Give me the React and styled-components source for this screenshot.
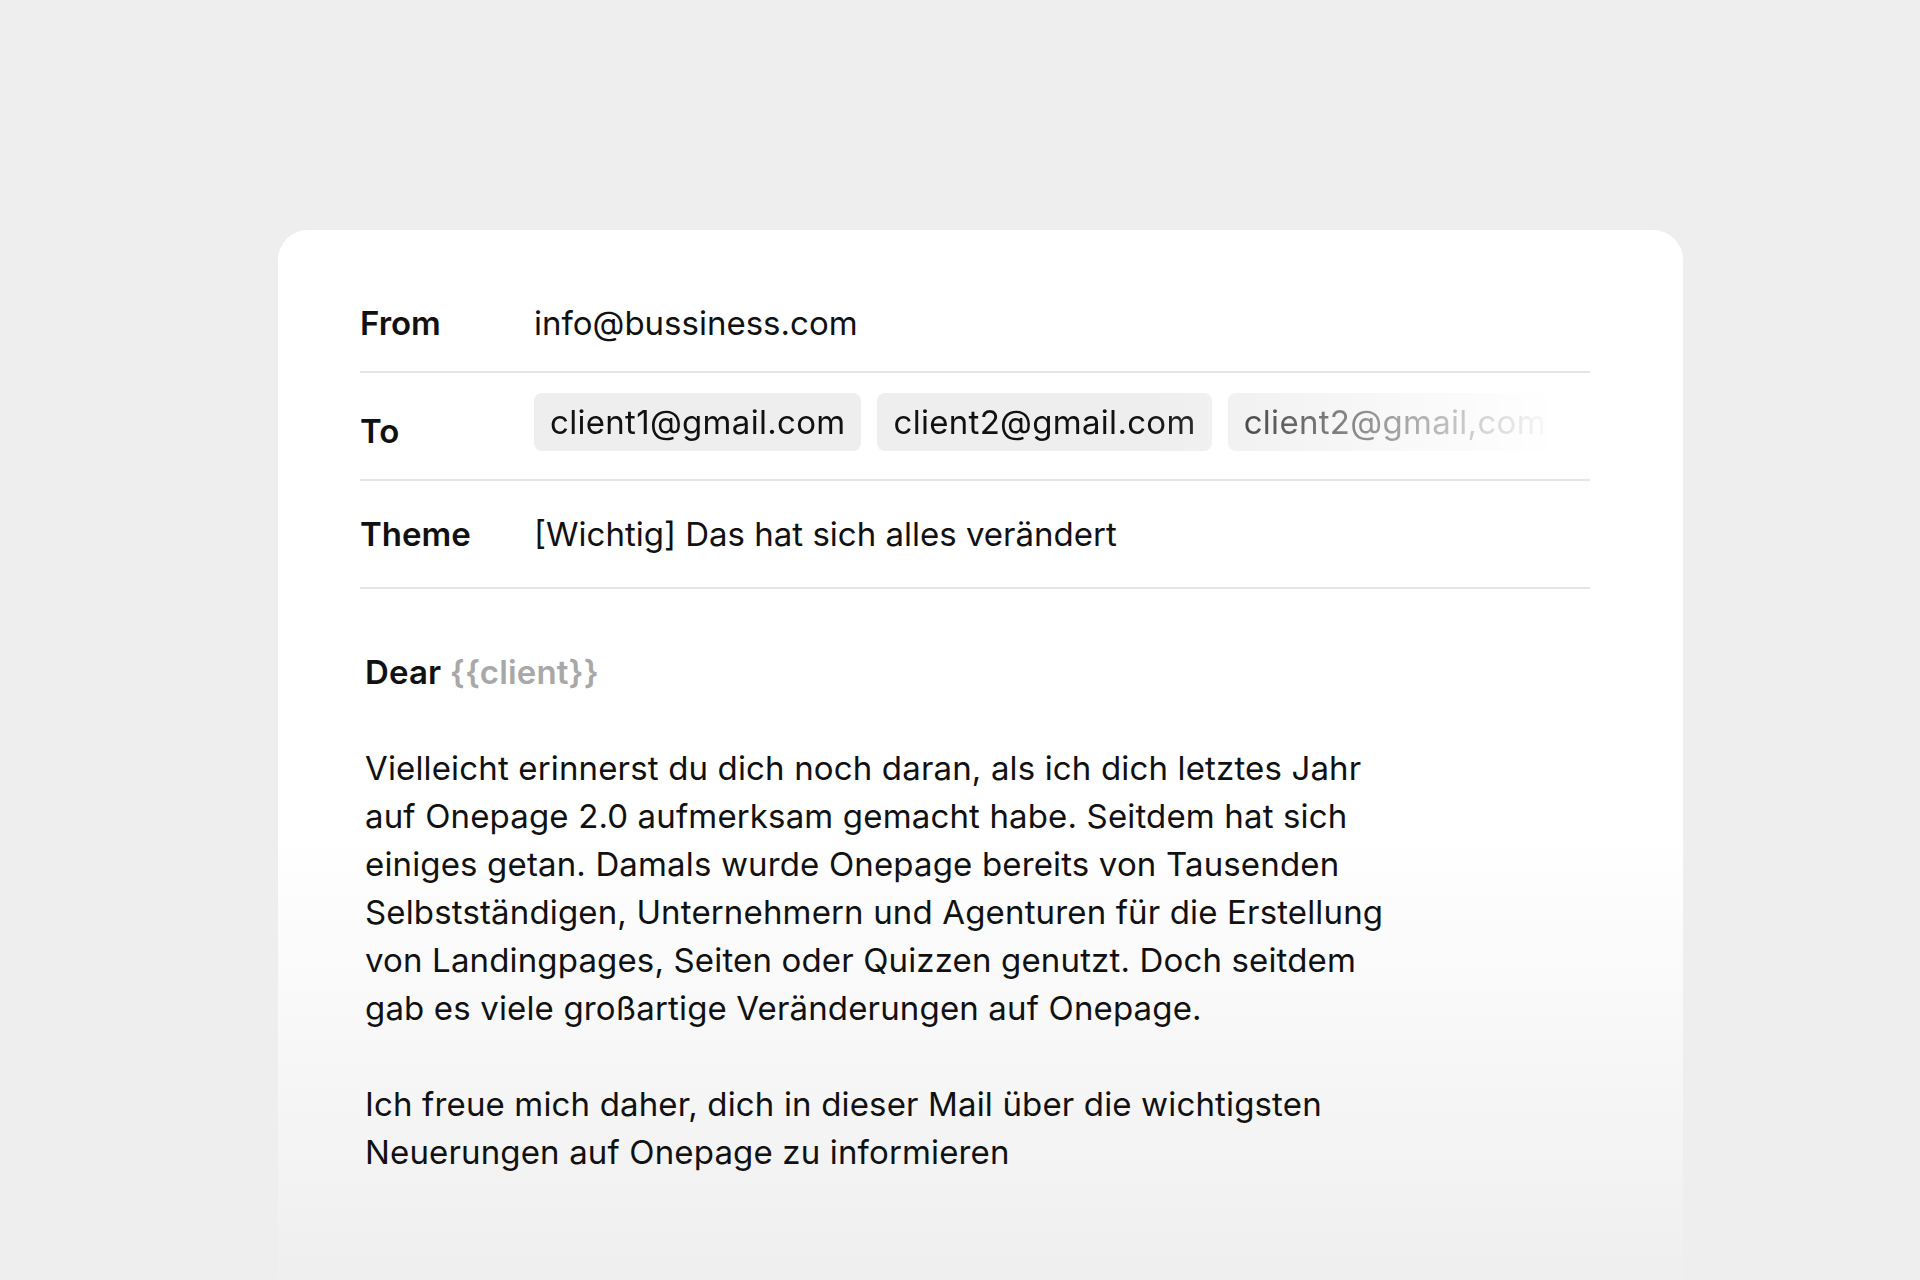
import React from "react";
import styled, { createGlobalStyle } from "styled-components";

const GlobalStyle = createGlobalStyle`
  html, body {
    margin: 0;
    padding: 0;
    background: #eeeeee;
    overflow: hidden;
  }
  body {
    font-family: Inter, "Noto Sans", sans-serif;
    color: #111;
  }
`;

const recipients = ["client1@gmail.com", "client2@gmail.com", "client2@gmail,com"];

export default function App() {
  return (
    <Page>
      <GlobalStyle />
      <Card>
        <Fields>
          <Row $offset={10}>
            <Label>From</Label>
            <Value>info@bussiness.com</Value>
          </Row>
          <Row>
            <Label $shift={10}>To</Label>
            <Chips>
              {recipients.map((mail, i) => (
                <Chip key={i}>{mail}</Chip>
              ))}
            </Chips>
          </Row>
          <Row>
            <Label>Theme</Label>
            <Value>[Wichtig] Das hat sich alles verändert</Value>
          </Row>
        </Fields>

        <Body>
          <Greeting>
            Dear <Placeholder>{"{{client}}"}</Placeholder>
          </Greeting>
          <Paragraph>
            Vielleicht erinnerst du dich noch daran, als ich dich letztes Jahr
            <br />
            auf Onepage 2.0 aufmerksam gemacht habe. Seitdem hat sich
            <br />
            einiges getan. Damals wurde Onepage bereits von Tausenden
            <br />
            Selbstständigen, Unternehmern und Agenturen für die Erstellung
            <br />
            von Landingpages, Seiten oder Quizzen genutzt. Doch seitdem
            <br />
            gab es viele großartige Veränderungen auf Onepage.
          </Paragraph>
          <Paragraph>
            Ich freue mich daher, dich in dieser Mail über die wichtigsten
            <br />
            Neuerungen auf Onepage zu informieren
          </Paragraph>
        </Body>
      </Card>
    </Page>
  );
}

const Page = styled.div`
  min-height: 1280px;
  padding: 230px 0 0 278px;
  box-sizing: border-box;
`;

const Card = styled.div`
  width: 1405px;
  min-height: 1100px;
  box-sizing: border-box;
  padding: 35px 93px 0 82px;
  border-radius: 30px 30px 0 0;
  background: linear-gradient(180deg, #ffffff 0%, #ffffff 55%, #efefef 95%);
`;

const Fields = styled.div`
  display: flex;
  flex-direction: column;
`;

const Row = styled.div`
  display: flex;
  align-items: center;
  box-sizing: border-box;
  min-height: 108px;
  padding-top: ${(p) => p.$offset || 0}px;
  border-bottom: 2px solid #e5e5e5;
`;

const Label = styled.div`
  width: 174px;
  flex-shrink: 0;
  font-size: 33px;
  font-weight: 600;
  line-height: 48px;
  color: #111;
  padding-top: ${(p) => p.$shift || 0}px;
`;

const Value = styled.div`
  font-size: 33px;
  font-weight: 400;
  line-height: 48px;
  color: #111;
`;

const Chips = styled.div`
  display: flex;
  gap: 16px;
  flex: 1;
  overflow: hidden;
  padding-bottom: 8px;
  -webkit-mask-image: linear-gradient(90deg, #000 58%, transparent 97%);
  mask-image: linear-gradient(90deg, #000 58%, transparent 97%);
`;

const Chip = styled.div`
  flex-shrink: 0;
  height: 58px;
  display: flex;
  align-items: center;
  padding: 0 16px;
  border-radius: 8px;
  background: #eeeeee;
  font-size: 33px;
  letter-spacing: 0.3px;
  line-height: 1;
  color: #111;
  white-space: nowrap;
`;

const Body = styled.div`
  padding: 59px 0 0 5px;
  font-size: 33px;
  letter-spacing: 0.15px;
  line-height: 48px;
  color: #111;
`;

const Greeting = styled.p`
  margin: 0 0 48px;
  font-weight: 600;
`;

const Placeholder = styled.span`
  color: #a8a8a8;
`;

const Paragraph = styled.p`
  margin: 0 0 48px;
  font-weight: 400;
  white-space: nowrap;
`;
